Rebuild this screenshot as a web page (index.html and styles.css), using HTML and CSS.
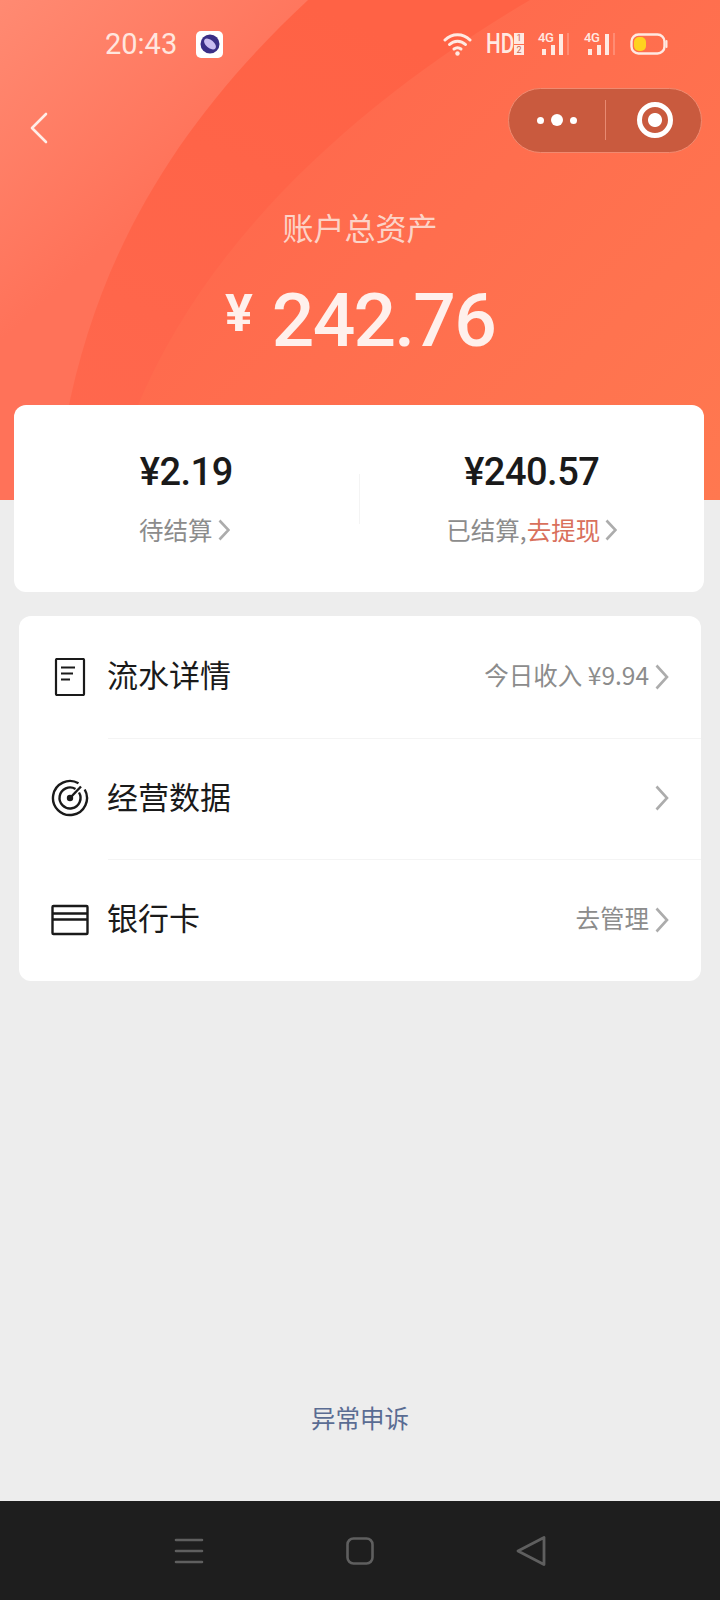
FILE: index.html
```html
<!DOCTYPE html>
<html lang="zh-CN">
<head>
    <meta charset="UTF-8">
    <meta name="viewport" content="width=device-width, initial-scale=1.0">
    <title>账户总资产</title>
    <link rel="stylesheet" href="styles.css">
</head>
<body>
    <div class="page">
        <!-- Orange header -->
        <div class="hero">
            <svg class="hero-bg" width="720" height="500" viewBox="0 0 720 500">
                <defs>
                    <linearGradient id="bgLeft" gradientUnits="userSpaceOnUse" x1="0" y1="0" x2="170" y2="190">
                        <stop offset="0" stop-color="#ff8a72"/>
                        <stop offset="1" stop-color="#ff7259"/>
                    </linearGradient>
                    <linearGradient id="bgMid" gradientUnits="userSpaceOnUse" x1="300" y1="0" x2="100" y2="480">
                        <stop offset="0" stop-color="#ff6245"/>
                        <stop offset="1" stop-color="#ff684e"/>
                    </linearGradient>
                    <linearGradient id="bgRight" gradientUnits="userSpaceOnUse" x1="300" y1="100" x2="720" y2="500">
                        <stop offset="0" stop-color="#ff694d"/>
                        <stop offset="1" stop-color="#ff7850"/>
                    </linearGradient>
                </defs>
                <rect width="720" height="500" fill="url(#bgLeft)"/>
                <path d="M308 0C190 110 100 240 66 420L66 500H720V0Z" fill="url(#bgMid)"/>
                <path d="M530 0C370 95 210 230 136 410L125 500H720V0Z" fill="url(#bgRight)"/>
            </svg>

            <div class="status-bar">
                <span class="time">20:43</span>
                <span class="app-badge">
                    <svg width="20" height="20" viewBox="0 0 20 20">
                        <circle cx="10" cy="10" r="9.5" fill="#3a2f86"/>
                        <ellipse cx="10" cy="10" rx="7" ry="4" transform="rotate(40 10 10)" fill="#c9bdf0"/>
                    </svg>
                </span>
                <span class="status-icons">
                    <svg width="29" height="24" viewBox="0 0 29 24" fill="none" stroke="#ffe9e2" stroke-width="3" stroke-linecap="round">
                        <path d="M2 8C9 1 20 1 27 8"/>
                        <path d="M6.5 12.5C11 8 18 8 22.5 12.5"/>
                        <path d="M11 17C13 15.500 16 15.500 18 17"/>
                        <circle cx="14.500" cy="21.500" r="2.200" fill="#ffe9e2" stroke="none"/>
                    </svg>
                    <span class="hd"><span class="hd-text">HD</span><span class="sim-stack"><i>1</i><i>2</i></span></span>
                    <span class="signal">
                        <b>4G</b>
                        <svg width="32" height="22" viewBox="0 0 32 22" fill="#ffe9e2">
                            <rect x="4" y="16" width="4" height="6"/>
                            <rect x="13" y="12" width="4" height="10"/>
                            <rect x="21" y="1" width="4" height="21"/>
                            <rect x="29" y="0" width="2" height="22" opacity=".25"/>
                        </svg>
                    </span>
                    <span class="signal">
                        <b>4G</b>
                        <svg width="32" height="22" viewBox="0 0 32 22" fill="#ffe9e2">
                            <rect x="4" y="16" width="4" height="6"/>
                            <rect x="13" y="12" width="4" height="10"/>
                            <rect x="21" y="1" width="4" height="21"/>
                            <rect x="29" y="0" width="2" height="22" opacity=".25"/>
                        </svg>
                    </span>
                    <svg width="38" height="22" viewBox="0 0 38 22">
                        <rect x="1.500" y="1.500" width="33" height="19" rx="7" fill="none" stroke="#ffe9e2" stroke-width="2.400"/>
                        <rect x="4" y="4" width="12" height="14" rx="5" fill="#ffd21f"/>
                        <rect x="35.500" y="7" width="2" height="8" rx="1" fill="#ffe9e2"/>
                    </svg>
                </span>
            </div>

            <div class="nav-bar">
                <svg class="back" width="18" height="32" viewBox="0 0 18 32" fill="none" stroke="#ffeee8" stroke-width="2.600" stroke-linecap="round" stroke-linejoin="round">
                    <path d="M16 2L2 16L16 30"/>
                </svg>
                <div class="capsule">
                    <span class="capsule-dots"><i></i><i class="big"></i><i></i></span>
                    <span class="capsule-line"></span>
                    <span class="capsule-target"><i></i></span>
                </div>
            </div>

            <p class="hero-title">账户总资产</p>
            <p class="hero-amount"><span class="yen">¥</span>242.76</p>
        </div>

        <!-- Balance card -->
        <div class="balance-card">
            <div class="balance-col">
                <div class="balance-num">¥2.19</div>
                <div class="balance-label pending">待结算
                    <svg class="chevron small" viewBox="0 0 12 22"><path d="M1.500 1.500L10.500 11L1.500 20.500"/></svg>
                </div>
            </div>
            <div class="balance-sep"></div>
            <div class="balance-col">
                <div class="balance-num">¥240.57</div>
                <div class="balance-label"><span>已结算,<span class="link-red">去提现</span></span>
                    <svg class="chevron small" viewBox="0 0 12 22"><path d="M1.500 1.500L10.500 11L1.500 20.500"/></svg>
                </div>
            </div>
        </div>

        <!-- Menu -->
        <div class="menu-card">
            <div class="menu-row">
                <svg class="menu-icon" width="38" height="38" viewBox="0 0 38 38" fill="none" stroke="#1a1a1a" stroke-width="2.200">
                    <rect x="5" y="1" width="28" height="36" rx="1"/>
                    <path d="M10 9.500H24M10 15.500H22M10 21.500H19"/>
                </svg>
                <span class="menu-name">流水详情</span>
                <span class="menu-extra">今日收入 ¥9.94</span>
                <svg class="chevron" viewBox="0 0 14 26"><path d="M1.500 1.500L12 13L1.500 24.500"/></svg>
            </div>
            <div class="menu-row">
                <svg class="menu-icon" width="38" height="38" viewBox="0 0 38 38" fill="none" stroke="#1a1a1a" stroke-width="2.400">
                    <path d="M27.500 4.300A17 17 0 1 0 33.700 10.500"/>
                    <path d="M24.500 10A10.500 10.500 0 1 0 28 13.500"/>
                    <path d="M19 19L30 7.500"/>
                    <circle cx="19" cy="19" r="3.200" fill="#1a1a1a" stroke="none"/>
                </svg>
                <span class="menu-name">经营数据</span>
                <span class="menu-extra"></span>
                <svg class="chevron" viewBox="0 0 14 26"><path d="M1.500 1.500L12 13L1.500 24.500"/></svg>
            </div>
            <div class="menu-row">
                <svg class="menu-icon" width="38" height="38" viewBox="0 0 38 38" fill="none" stroke="#1a1a1a" stroke-width="2.400">
                    <rect x="1.500" y="5" width="35" height="28" rx="1"/>
                    <path d="M1.500 12.500H36.500M1.500 18.500H36.500"/>
                </svg>
                <span class="menu-name">银行卡</span>
                <span class="menu-extra">去管理</span>
                <svg class="chevron" viewBox="0 0 14 26"><path d="M1.500 1.500L12 13L1.500 24.500"/></svg>
            </div>
        </div>

        <div class="appeal">异常申诉</div>

        <!-- System nav -->
        <div class="sys-nav">
            <svg width="30" height="28" viewBox="0 0 30 28" stroke="#5f5f5f" stroke-width="2.600" stroke-linecap="round">
                <path d="M2 3H28M2 14H28M2 25H28"/>
            </svg>
            <svg width="28" height="28" viewBox="0 0 28 28" fill="none" stroke="#5f5f5f" stroke-width="2.600">
                <rect x="1.500" y="1.500" width="25" height="25" rx="6"/>
            </svg>
            <svg width="30" height="32" viewBox="0 0 30 32" fill="none" stroke="#5f5f5f" stroke-width="2.800" stroke-linejoin="round">
                <path d="M28 2.500V29.500L2 16Z"/>
            </svg>
        </div>
    </div>
</body>
</html>
```

FILE: styles.css
```css
/* General Styling */
* {
    box-sizing: border-box;
}
body {
    margin: 0;
    padding: 0;
    background-color: #ededed;
    font-family: "Noto Sans CJK SC", "Noto Sans", sans-serif;
}
p {
    margin: 0;
}
.page {
    width: 720px;
    height: 1600px;
    display: flex;
    flex-direction: column;
    overflow: hidden;
}

/* Header */
.hero {
    position: relative;
    height: 500px;
    flex-shrink: 0;
    color: #fff;
}
.hero-bg {
    position: absolute;
    top: 0;
    left: 0;
}
.status-bar,
.nav-bar,
.hero-title,
.hero-amount {
    position: relative;
}
.status-bar {
    display: flex;
    align-items: center;
    height: 88px;
    padding-left: 105px;
}
.time {
    width: 91px;
    font-family: Roboto, sans-serif;
    font-size: 29px;
    color: #ffe6de;
}
.app-badge {
    display: flex;
    align-items: center;
    justify-content: center;
    width: 27px;
    height: 27px;
    background-color: #fff;
    border-radius: 5px;
}
.status-icons {
    display: flex;
    align-items: center;
    gap: 14px;
    margin-left: auto;
    padding-right: 52px;
}
.hd {
    display: flex;
    align-items: center;
    width: 38px;
    color: #ffe9e2;
}
.hd-text {
    width: 28px;
    font-family: Roboto, sans-serif;
    font-size: 28px;
    font-weight: 500;
    line-height: 24px;
    transform: scaleX(0.74);
    transform-origin: left center;
}
.sim-stack {
    display: flex;
    flex-direction: column;
    gap: 1px;
}
.sim-stack i {
    display: block;
    width: 10px;
    height: 10.5px;
    background-color: #ffe9e2;
    color: #c96a55;
    font: 9px/10px Roboto, sans-serif;
    text-align: center;
}
.signal {
    position: relative;
    display: flex;
}
.signal b {
    position: absolute;
    top: -1px;
    left: 0;
    font: 500 13px/12px Roboto, sans-serif;
    letter-spacing: -0.5px;
    color: #ffe9e2;
}

.nav-bar {
    display: flex;
    align-items: center;
    justify-content: space-between;
    height: 64px;
    padding: 0 18px 0 30px;
}
.back {
    margin-top: 16px;
}
.capsule {
    display: flex;
    align-items: center;
    width: 194px;
    height: 65px;
    background-color: #c95a3e;
    border: 1px solid #f08a70;
    border-radius: 33px;
}
.capsule-dots {
    display: flex;
    align-items: center;
    justify-content: center;
    gap: 7px;
    width: 96px;
}
.capsule-dots i {
    width: 7px;
    height: 7px;
    background-color: #fff;
    border-radius: 50%;
}
.capsule-dots i.big {
    width: 12px;
    height: 12px;
}
.capsule-line {
    width: 1px;
    height: 40px;
    background-color: #e88a72;
}
.capsule-target {
    display: flex;
    align-items: center;
    justify-content: center;
    width: 96px;
    height: 36px;
    padding-left: 3px;
}
.capsule-target i {
    width: 36px;
    height: 36px;
    border: 5px solid #fff;
    border-radius: 50%;
    background: radial-gradient(circle, #fff 0, #fff 6.500px, transparent 7.500px);
}

.hero-title {
    margin-top: 52px;
    font-size: 31px;
    line-height: 46px;
    text-align: center;
    color: #fcd3c7;
}
.hero-amount {
    margin-top: 18px;
    font-family: Roboto, sans-serif;
    font-size: 75px;
    font-weight: 500;
    letter-spacing: -1.800px;
    line-height: 92px;
    text-align: center;
    color: #fff0ec;
}
.yen {
    margin-right: 19px;
    font-size: 52px;
    font-weight: 700;
    letter-spacing: 0;
    vertical-align: 15px;
}

/* Balance card */
.balance-card {
    position: relative;
    display: flex;
    align-items: center;
    width: 690px;
    height: 187px;
    margin: -95px 0 0 14px;
    background-color: #fff;
    border-radius: 12px;
}
.balance-col {
    flex: 1;
    text-align: center;
}
.balance-sep {
    width: 1px;
    height: 50px;
    background-color: #f4f4f4;
}
.balance-num {
    font-family: Roboto, sans-serif;
    font-size: 38px;
    font-weight: 500;
    letter-spacing: -0.5px;
    line-height: 44px;
    color: #1a1a1a;
}
.balance-label {
    display: flex;
    align-items: center;
    justify-content: center;
    gap: 5px;
    margin-top: 18px;
    font-size: 24.500px;
    line-height: 36px;
    color: #8c8c8c;
}
.balance-label.pending {
    padding-right: 4px;
}
.link-red {
    color: #d9705c;
}

/* Menu */
.menu-card {
    width: 682px;
    margin: 24px 0 0 19px;
    background-color: #fff;
    border-radius: 12px;
}
.menu-row {
    position: relative;
    display: flex;
    align-items: center;
    height: 121.500px;
    padding: 0 32px;
}
.menu-row + .menu-row::before {
    content: "";
    position: absolute;
    top: 0;
    left: 89px;
    right: 0;
    height: 1px;
    background-color: #f4f4f4;
}
.menu-icon {
    flex-shrink: 0;
}
.menu-name {
    margin-left: 18px;
    padding-bottom: 6px;
    font-size: 31px;
    color: #1a1a1a;
}
.menu-extra {
    margin-left: auto;
    padding-bottom: 5px;
    font-size: 24.500px;
    color: #8c8c8c;
}
.chevron {
    width: 14px;
    height: 26px;
    margin-left: 6px;
    fill: none;
    stroke: #acacac;
    stroke-width: 2.600;
}
.chevron.small {
    width: 12px;
    height: 22px;
    margin-left: 0;
}

.appeal {
    margin-top: 417px;
    font-size: 24.500px;
    line-height: 40px;
    text-align: center;
    color: #5a6c93;
}

/* System nav */
.sys-nav {
    display: flex;
    align-items: center;
    justify-content: space-between;
    height: 99px;
    margin-top: auto;
    padding: 0 174px;
    background-color: #1e1e1e;
}
```
